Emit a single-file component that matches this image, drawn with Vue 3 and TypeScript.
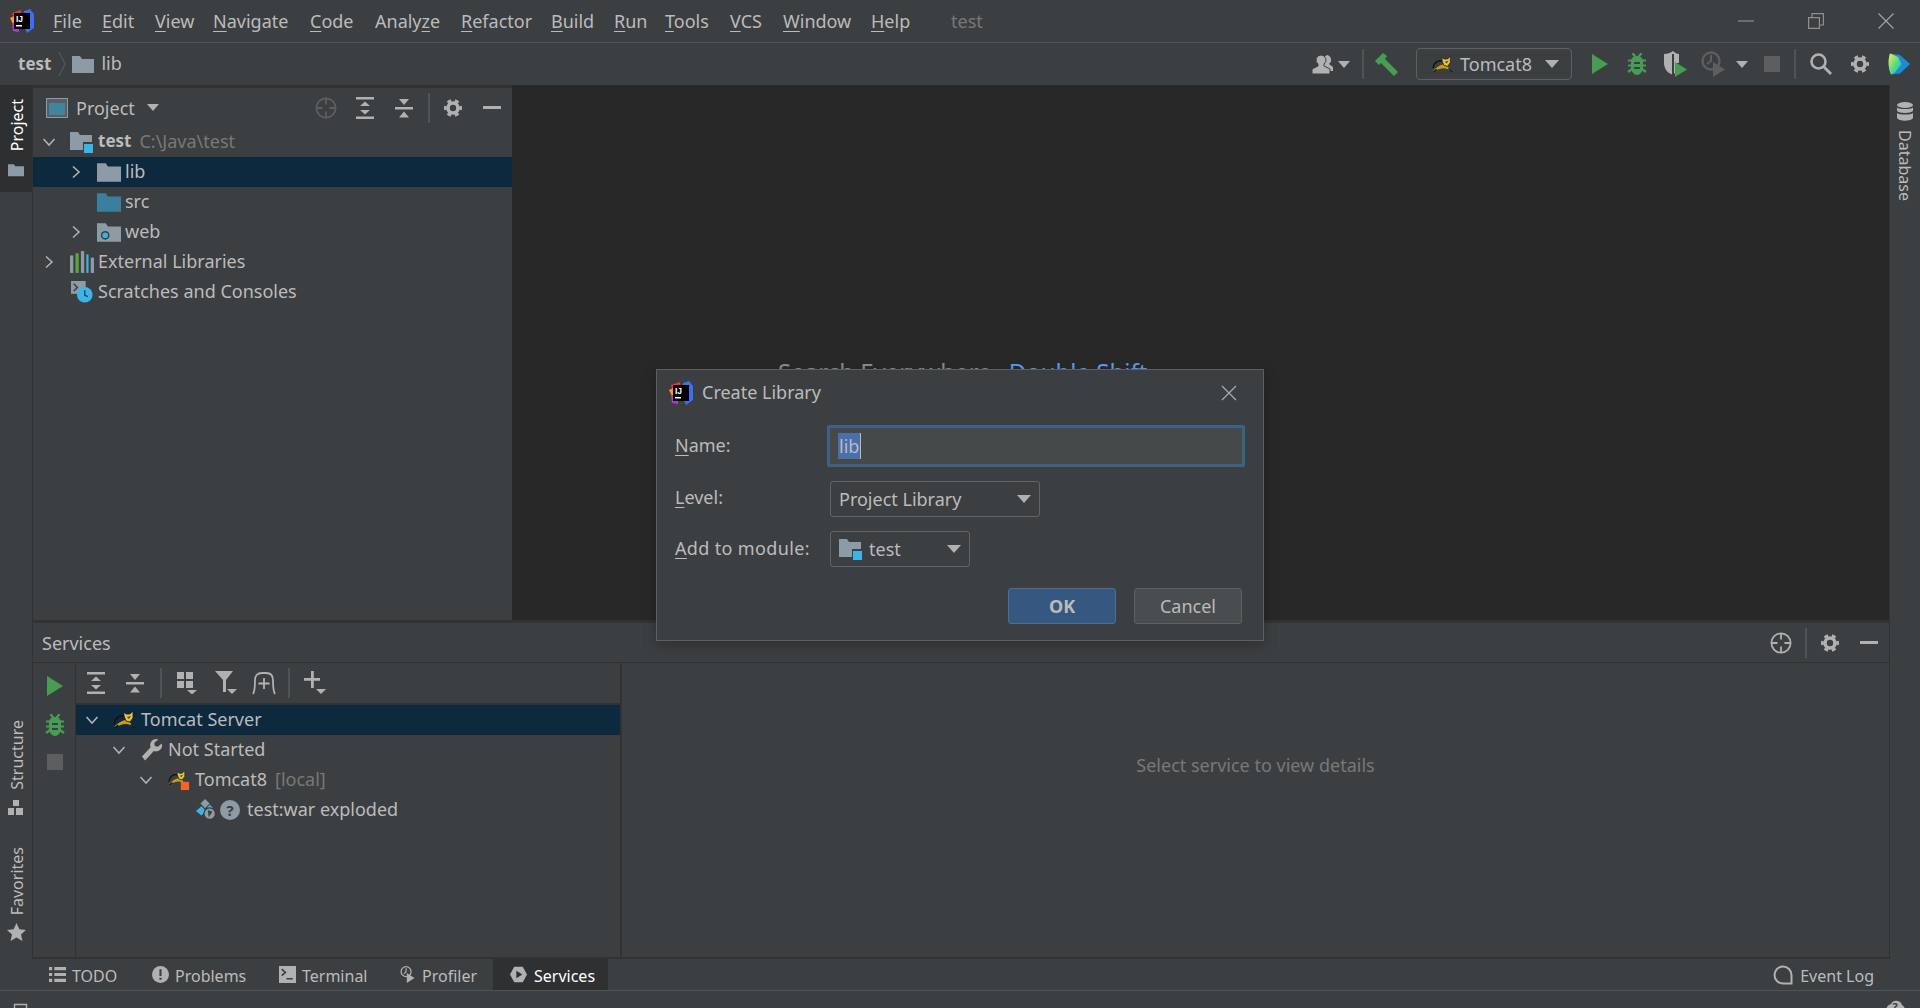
<script setup lang="ts">
interface Menu { pre: string; u: string; post: string; w: number }
interface Row { icon: string; icon2?: string; text: string; hint?: string; level: number; arrow?: 'down' | 'right'; bold?: boolean; selected?: boolean }

const menus: Menu[] = [
  { pre: '', u: 'F', post: 'ile', w: 49 },
  { pre: '', u: 'E', post: 'dit', w: 53 },
  { pre: '', u: 'V', post: 'iew', w: 58 },
  { pre: '', u: 'N', post: 'avigate', w: 97 },
  { pre: '', u: 'C', post: 'ode', w: 65 },
  { pre: 'Analy', u: 'z', post: 'e', w: 86 },
  { pre: '', u: 'R', post: 'efactor', w: 90 },
  { pre: '', u: 'B', post: 'uild', w: 63 },
  { pre: '', u: 'R', post: 'un', w: 51 },
  { pre: '', u: 'T', post: 'ools', w: 65 },
  { pre: '', u: 'V', post: 'CS', w: 53 },
  { pre: '', u: 'W', post: 'indow', w: 88 },
  { pre: '', u: 'H', post: 'elp', w: 80 },
]

const projectRows: Row[] = [
  { icon: 'i-module', text: 'test', hint: 'C:\\Java\\test', level: 0, arrow: 'down', bold: true },
  { icon: 'i-folder', text: 'lib', level: 1, arrow: 'right', selected: true },
  { icon: 'i-folder-src', text: 'src', level: 1 },
  { icon: 'i-folder-web', text: 'web', level: 1, arrow: 'right' },
  { icon: 'i-libs', text: 'External Libraries', level: 0, arrow: 'right' },
  { icon: 'i-scratch', text: 'Scratches and Consoles', level: 0 },
]

const serviceRows: Row[] = [
  { icon: 'i-tomcat', text: 'Tomcat Server', level: 0, arrow: 'down', selected: true },
  { icon: 'i-wrench', text: 'Not Started', level: 1, arrow: 'down' },
  { icon: 'i-tomcat-stop', text: 'Tomcat8', hint: '[local]', level: 2, arrow: 'down' },
  { icon: 'i-artifact', icon2: 'i-question', text: 'test:war exploded', level: 3 },
]

const bottomTabs = [
  { icon: 'i-todo', text: 'TODO', w: 103 },
  { icon: 'i-problems', text: 'Problems', w: 127 },
  { icon: 'i-terminal', text: 'Terminal', w: 120 },
  { icon: 'i-profiler', text: 'Profiler', w: 96 },
  { icon: 'i-services', text: 'Services', w: 115, active: true },
]
</script>

<template>
  <div class="ide">
    <!-- shared icons -->
    <svg class="defs" width="0" height="0">
      <defs>
        <linearGradient id="g-box" x1="0" y1="0" x2="1" y2="1">
          <stop offset="0" stop-color="#f7ea4a" />
          <stop offset=".55" stop-color="#55d98a" />
          <stop offset="1" stop-color="#12b5c9" />
        </linearGradient>
        <symbol id="i-logo" viewBox="0 0 24 24">
          <path d="M2 4 11 1 12 12 5 14Z" fill="#fe2857" />
          <path d="M14 2 20 0 24 5 24 19 17 24 12 14Z" fill="#3b6ff0" />
          <path d="M0 9 6 6 7 15 3 15Z" fill="#fd9a1e" />
          <path d="M2 14 9 14 9 23 3 22Z" fill="#b03bc8" />
          <rect x="4" y="4" width="16" height="16" fill="#000" />
          <text x="6" y="12.5" font-size="8.5" font-weight="700" font-family="Liberation Sans, sans-serif" fill="#fff">IJ</text>
          <rect x="6" y="16" width="6" height="1.5" fill="#fff" />
        </symbol>
        <symbol id="i-folder" viewBox="0 0 22 18">
          <path d="M0 1h8l2 3h12v14H0Z" fill="#8c9ba6" />
        </symbol>
        <symbol id="i-folder-src" viewBox="0 0 22 18">
          <path d="M0 1h8l2 3h12v14H0Z" fill="#3b7f9f" />
        </symbol>
        <symbol id="i-folder-web" viewBox="0 0 22 18">
          <path d="M0 1h8l2 3h12v14H0Z" fill="#8c9ba6" />
          <circle cx="7.5" cy="12" r="4" fill="#3d4042" />
          <circle cx="7.5" cy="12" r="2.6" fill="#3ab0e6" />
        </symbol>
        <symbol id="i-module" viewBox="0 0 24 22">
          <path d="M0 1h8l2 3h12v15H0Z" fill="#8c9ba6" />
          <rect x="13" y="11" width="11" height="11" fill="#3c3f41" />
          <rect x="14" y="13" width="9" height="9" fill="#3cb4e6" />
        </symbol>
        <symbol id="i-libs" viewBox="0 0 22 20">
          <rect x="0" y="4" width="3" height="16" fill="#8c9ba6" />
          <rect x="5" y="2" width="3" height="18" fill="#59a83a" />
          <rect x="10" y="0" width="3" height="20" fill="#8c9ba6" />
          <path d="M15 3h2v17h-2Z" fill="#3cb4e6" />
          <rect x="19" y="6" width="3" height="14" fill="#8c9ba6" />
        </symbol>
        <symbol id="i-scratch" viewBox="0 0 24 24">
          <rect x="0" y="0" width="16" height="14" fill="#8c9ba6" />
          <path d="M3 3l4 4-4 4" fill="none" stroke="#3c3f41" stroke-width="1.6" />
          <circle cx="15" cy="15" r="8.5" fill="#3cb4e6" />
          <path d="M15 10v5.5l3.5 1.5" fill="none" stroke="#1f4d63" stroke-width="1.6" />
        </symbol>
        <symbol id="i-gear" viewBox="0 0 20 20">
          <circle cx="10" cy="10" r="5" fill="none" stroke="currentColor" stroke-width="3.6" />
          <circle cx="10" cy="10" r="7.6" fill="none" stroke="currentColor" stroke-width="2.8" pathLength="12" stroke-dasharray="1 1" stroke-dashoffset=".5" />
        </symbol>
        <symbol id="i-target" viewBox="0 0 22 22">
          <circle cx="11" cy="11" r="9.6" fill="none" stroke="currentColor" stroke-width="1.8" />
          <path d="M11 1.5v6M11 14.5v6M1.5 11h6M14.5 11h6" stroke="currentColor" stroke-width="1.8" />
        </symbol>
        <symbol id="i-expand" viewBox="0 0 20 22">
          <path d="M1 0h18v2.4H1ZM1 19.6h18V22H1ZM10 4.500l5 4.500H5ZM10 17.500l-5-4.500h10Z" fill="currentColor" />
        </symbol>
        <symbol id="i-collapse" viewBox="0 0 20 22">
          <path d="M1 10h18v2.4H1ZM10 8 5 2h10ZM10 14.500l5 6H5Z" fill="currentColor" />
        </symbol>
        <symbol id="i-hammer" viewBox="0 0 24 24">
          <path d="M1 9 9 1l4 3-2 3 13 13-4 4L7 11l-2 2Z" fill="#499c54" />
        </symbol>
        <symbol id="i-bug" viewBox="0 0 20 22">
          <g fill="none" stroke="#499c54" stroke-width="2.2">
            <path d="M5.500 0l3 4M14.500 0l-3 4M1 7.500h5M1 12.500h4M1 19l4-3M19 7.500h-5M19 12.500h-4M19 19l-4-3" />
          </g>
          <path d="M10 3c3 0 5.500 2 6 4.500V15c0 3.500-3 7-6 7s-6-3.500-6-7V7.500C4.500 5 7 3 10 3Z" fill="#499c54" />
          <path d="M7 10h6M7 15h6" stroke="#3c3f41" stroke-width="2" />
        </symbol>
        <symbol id="i-coverage" viewBox="0 0 24 26">
          <path d="M1 3c3 0 7-1 9-3 2 2 4 3 6 3v9h-4v10l-2 2C4 22 1 17 1 12Z" fill="#afb1b3" />
          <path d="M10 3v21" stroke="#3c3f41" stroke-width="2" />
          <path d="M12 11l12 7.500-12 7.500Z" fill="#499c54" />
        </symbol>
        <symbol id="i-profile-run" viewBox="0 0 24 26">
          <circle cx="10" cy="10" r="8.500" fill="none" stroke="#5c5e60" stroke-width="2.400" />
          <path d="M10 4v6l-4 3" fill="none" stroke="#5c5e60" stroke-width="2" />
          <path d="M12 11l12 7.500-12 7.500Z" fill="#5c5e60" />
        </symbol>
        <symbol id="i-search" viewBox="0 0 22 22">
          <circle cx="8.500" cy="8.500" r="7" fill="none" stroke="currentColor" stroke-width="2.600" />
          <path d="M13.500 13.500l7.500 7.500" stroke="currentColor" stroke-width="2.800" />
        </symbol>
        <symbol id="i-toolbox" viewBox="0 0 22 22">
          <path d="M2 0.500 12 2 22 11 12 20.500 3 21.500C0 15 0 6 2 .5Z" fill="#1a8dd8" />
          <path d="M2 .5 10 4 13.500 11 7 19.500 3 21.500C0 15 0 6 2 .5Z" fill="url(#g-box)" />
        </symbol>
        <symbol id="i-user" viewBox="0 0 22 20">
          <path d="M12 5a5 5 0 0 1 3-4 5 5 0 0 1 2 9l4 3v4h-5l-4-4Z" fill="currentColor" />
          <path d="M9 1a5 5 0 0 1 3 9v2l6 3v5H0v-5l6-3v-2A5 5 0 0 1 9 1Z" fill="currentColor" stroke="#3c3f41" stroke-width="1" />
        </symbol>
        <symbol id="i-tomcat" viewBox="0 0 24 20">
          <path d="M1 17C5 13 8 11 12 10l4 2c2 1 4 3 6 5-4-2-7-3-9-3-4 0-8 2-12 3Z" fill="#c99c16" />
          <path d="M1 14C2 8 6 5 11 6" fill="none" stroke="#111" stroke-width="1.600" />
          <path d="M11 2l2 2h4l3-3v7l-3 4-4-1-2-5Z" fill="#e6c14a" stroke="#1c1c1c" stroke-width=".8" />
          <path d="M14 7l2 2 2-3Z" fill="#5c4808" />
          <path d="M5 15 2 18M18 14l4 4" stroke="#111" stroke-width="1.200" />
        </symbol>
        <symbol id="i-tomcat-stop" viewBox="0 0 24 24">
          <use href="#i-tomcat" width="22" height="20" />
          <rect x="14" y="14" width="9" height="9" fill="#f26522" />
        </symbol>
        <symbol id="i-wrench" viewBox="0 0 22 24">
          <path d="M15.500 0a6.500 6.500 0 0 0-6 9L0 19l3.500 4.500L13 13a6.500 6.500 0 0 0 9-6l-.5-2-4 3.500-3.500-1-.5-3.500L18 .5Z" fill="#afb1b3" />
        </symbol>
        <symbol id="i-artifact" viewBox="0 0 22 24">
          <path d="M6 8 0 13l6 5 5-5Z" fill="#3cb4e6" />
          <path d="M10 0 5 5l5 5 5-5Z" fill="#8c9ba6" />
          <path d="M15 6l4 4-7 0Z" fill="#3cb4e6" />
          <circle cx="15" cy="16" r="7" fill="#3c3f41" />
          <circle cx="15" cy="16" r="5.600" fill="#8c9ba6" />
          <path d="M13 12l5 2-2 3-2 3Z" fill="#3c3f41" />
        </symbol>
        <symbol id="i-question" viewBox="0 0 20 20">
          <circle cx="10" cy="10" r="10" fill="#8c9ba6" />
          <text x="10" y="15.500" text-anchor="middle" font-size="15" font-weight="700" font-family="Noto Sans, sans-serif" fill="#3c3f41">?</text>
        </symbol>
        <symbol id="i-group" viewBox="0 0 20 22">
          <path d="M0 0h7v7H0ZM9 0h7v7H9ZM0 9h7v7H0ZM9 9h7v7H9Z" fill="#afb1b3" />
          <path d="M10 18h10l-5 4.500Z" fill="#afb1b3" />
        </symbol>
        <symbol id="i-filter" viewBox="0 0 22 24">
          <path d="M0 0h18l-7 9v12H8V9Z" fill="#afb1b3" />
          <path d="M12 18h10l-5 5Z" fill="#afb1b3" />
        </symbol>
        <symbol id="i-newtab" viewBox="0 0 24 24">
          <path d="M1 23c2-3 2-6 2-14 0-4 2-7 7-7h4c5 0 7 3 7 7 0 8 0 11 2 14" fill="none" stroke="#afb1b3" stroke-width="1.800" />
          <path d="M12 7v11M6.500 12.500h11" stroke="#afb1b3" stroke-width="1.800" />
        </symbol>
        <symbol id="i-plus" viewBox="0 0 22 24">
          <path d="M7 0h2.800v7H16v2.800H9.800V17H7V9.800H0V7h7Z" fill="#afb1b3" />
          <path d="M12 18h10l-5 5Z" fill="#afb1b3" />
        </symbol>
        <symbol id="i-todo" viewBox="0 0 16 16">
          <path d="M0 1h3v3H0ZM5 1h11v3H5ZM0 6.500h3v3H0ZM5 6.500h11v3H5ZM0 12h3v3H0ZM5 12h11v3H5Z" fill="#afb1b3" />
        </symbol>
        <symbol id="i-problems" viewBox="0 0 16 16">
          <circle cx="8" cy="8" r="8" fill="#afb1b3" />
          <path d="M7 3h2v6.500H7ZM7 11h2v2H7Z" fill="#3c3f41" />
        </symbol>
        <symbol id="i-terminal" viewBox="0 0 16 16">
          <rect width="16" height="16" fill="#afb1b3" />
          <path d="M2.500 3l3.500 3-3.500 3M7 12h6" fill="none" stroke="#3c3f41" stroke-width="1.500" />
        </symbol>
        <symbol id="i-profiler" viewBox="0 0 20 24">
          <circle cx="8" cy="8" r="7" fill="none" stroke="#afb1b3" stroke-width="1.800" />
          <path d="M8 3v5l-3 3" fill="none" stroke="#afb1b3" stroke-width="1.600" />
          <path d="M9 10l11 7-11 7Z" fill="#afb1b3" />
        </symbol>
        <symbol id="i-services" viewBox="0 0 20 20">
          <path d="M5 1h10l5 9-5 9H5L0 10Z" fill="#afb1b3" />
          <path d="M7.500 5.500l7 4.500-7 4.500Z" fill="#2e3032" />
        </symbol>
      </defs>
    </svg>

    <header class="titlebar">
      <svg class="logo"><use href="#i-logo" /></svg>
      <nav class="menu">
        <span v-for="m in menus" :key="m.pre + m.u + m.post" class="menu-item" :style="{ width: m.w + 'px' }">{{ m.pre }}<u>{{ m.u }}</u>{{ m.post }}</span>
      </nav>
      <span class="win-title">test</span>
      <div class="win-buttons">
        <svg width="16" height="16" viewBox="0 0 16 16"><path d="M0 8h16" stroke="#8d8f91" stroke-width="1.200" /></svg>
        <svg width="16" height="16" viewBox="0 0 16 16"><path d="M.6 4.600h10.800v10.800H.6ZM4 4.500V.6h11.400V12H11.500" fill="none" stroke="#8d8f91" stroke-width="1.200" /></svg>
        <svg width="16" height="16" viewBox="0 0 16 16"><path d="M.5.500l15 15M15.500.500l-15 15" stroke="#a0a2a4" stroke-width="1.200" /></svg>
      </div>
    </header>

    <div class="navbar">
      <b class="crumb-root">test</b>
      <svg class="crumb-sep" width="8" height="26" viewBox="0 0 8 26"><path d="M1 1l6 12-6 12" fill="none" stroke="#5c5f61" /></svg>
      <svg class="ic-folder" width="22" height="18"><use href="#i-folder" /></svg>
      <span class="crumb-text">lib</span>
      <div class="nav-tools">
        <svg class="t-user" width="22" height="20"><use href="#i-user" /></svg>
        <i class="caret t-user-caret"></i>
        <i class="tool-sep t-sep1"></i>
        <svg class="t-hammer" width="24" height="24"><use href="#i-hammer" /></svg>
        <div class="run-combo">
          <svg width="22" height="19"><use href="#i-tomcat" /></svg>
          <span>Tomcat8</span>
          <i class="caret big"></i>
        </div>
        <svg class="t-run" width="16" height="20" viewBox="0 0 16 20"><path d="M0 0l16 10L0 20Z" fill="#499c54" /></svg>
        <svg class="t-bug" width="20" height="22"><use href="#i-bug" /></svg>
        <svg class="t-cov" width="24" height="26"><use href="#i-coverage" /></svg>
        <svg class="t-prof" width="24" height="26"><use href="#i-profile-run" /></svg>
        <i class="caret t-prof-caret"></i>
        <i class="stop t-stop"></i>
        <i class="tool-sep t-sep2"></i>
        <svg class="t-search" width="22" height="22"><use href="#i-search" /></svg>
        <svg class="t-gear" width="20" height="20"><use href="#i-gear" /></svg>
        <svg class="t-box" width="22" height="22"><use href="#i-toolbox" /></svg>
      </div>
    </div>

    <div class="main">
      <aside class="stripe left">
        <div class="tab-project">
          <span class="vlabel up">Project</span>
          <svg width="16" height="14" viewBox="0 0 22 18"><use href="#i-folder" /></svg>
        </div>
        <div class="stripe-bottom">
          <div class="tab-plain structure">
            <span class="vlabel up">Structure</span>
            <svg width="16" height="15" viewBox="0 0 16 15"><path d="M5 0h6v6H5ZM0 8h6v7H0ZM8 8h7v7H8Z" fill="#afb1b3" /></svg>
          </div>
          <div class="tab-plain">
            <span class="vlabel up">Favorites</span>
            <svg width="19" height="18" viewBox="0 0 19 18"><path d="M9.500 0l2.900 6.200 6.600.7-5 4.500 1.500 6.600-6-3.500-6 3.500 1.500-6.600-5-4.500 6.600-.7Z" fill="#afb1b3" /></svg>
          </div>
        </div>
      </aside>

      <div class="center">
        <div class="upper">
          <section class="project">
            <div class="panel-head">
              <svg class="view-ic" width="22" height="20" viewBox="0 0 22 20"><rect x=".5" y=".5" width="21" height="19" fill="#5b5e60" stroke="#8c9ba6" /><rect x="3" y="5" width="16" height="12" fill="#3e86a0" /></svg>
              <span class="panel-name">Project</span>
              <i class="caret"></i>
              <div class="head-tools">
                <svg class="dim h-target" width="22" height="22"><use href="#i-target" /></svg>
                <svg class="h-expand" width="20" height="22"><use href="#i-expand" /></svg>
                <svg class="h-collapse" width="20" height="22"><use href="#i-collapse" /></svg>
                <i class="tool-sep h-sep"></i>
                <svg class="h-gear" width="20" height="20"><use href="#i-gear" /></svg>
                <i class="hide"></i>
              </div>
            </div>
            <div v-for="r in projectRows" :key="r.text" class="row" :class="{ selected: r.selected }" :style="{ paddingLeft: 9 + r.level * 27 + 'px' }">
              <span class="arrow">
                <svg v-if="r.arrow" width="14" height="14" viewBox="0 0 14 14"><path :d="r.arrow === 'down' ? 'M1.500 4l5.500 6 5.500-6' : 'M4 1.500l6 5.500-6 5.500'" fill="none" stroke="#afb1b3" stroke-width="1.600" /></svg>
              </span>
              <svg class="row-ic" width="24" height="22"><use :href="'#' + r.icon" /></svg>
              <span class="row-text" :class="{ bold: r.bold }">{{ r.text }}</span>
              <span v-if="r.hint" class="row-hint">{{ r.hint }}</span>
            </div>
          </section>
          <section class="editor">
            <div class="empty-hint">Search Everywhere<span class="shortcut">Double Shift</span></div>
          </section>
        </div>

        <section class="services">
          <div class="panel-head services-head">
            <span class="services-name">Services</span>
            <div class="head-tools">
              <svg class="h-target" width="22" height="22"><use href="#i-target" /></svg>
              <i class="tool-sep h-sep"></i>
              <svg class="h-gear" width="20" height="20"><use href="#i-gear" /></svg>
              <i class="hide"></i>
            </div>
          </div>
          <div class="services-body">
            <div class="svc-strip">
              <svg width="16" height="20" viewBox="0 0 16 20"><path d="M0 0l16 10L0 20Z" fill="#499c54" /></svg>
              <svg width="20" height="22"><use href="#i-bug" /></svg>
              <i class="stop"></i>
            </div>
            <div class="svc-tree">
              <div class="svc-toolbar">
                <svg class="a1" width="20" height="22"><use href="#i-expand" /></svg>
                <svg class="a2" width="20" height="22"><use href="#i-collapse" /></svg>
                <i class="tool-sep a3"></i>
                <svg class="a4" width="20" height="22"><use href="#i-group" /></svg>
                <svg class="a5" width="22" height="24"><use href="#i-filter" /></svg>
                <svg class="a6" width="24" height="24"><use href="#i-newtab" /></svg>
                <i class="tool-sep a7"></i>
                <svg class="a8" width="22" height="24"><use href="#i-plus" /></svg>
              </div>
              <div v-for="r in serviceRows" :key="r.text" class="row" :class="{ selected: r.selected }" :style="{ paddingLeft: 9 + r.level * 27 + 'px' }">
                <span class="arrow">
                  <svg v-if="r.arrow" width="14" height="14" viewBox="0 0 14 14"><path d="M1.500 4l5.500 6 5.500-6" fill="none" stroke="#afb1b3" stroke-width="1.600" /></svg>
                </span>
                <svg class="row-ic" width="24" height="22"><use :href="'#' + r.icon" /></svg>
                <svg v-if="r.icon2" class="row-ic2" width="20" height="20"><use :href="'#' + r.icon2" /></svg>
                <span class="row-text">{{ r.text }}</span>
                <span v-if="r.hint" class="row-hint">{{ r.hint }}</span>
              </div>
            </div>
            <div class="svc-detail">Select service to view details</div>
          </div>
        </section>
      </div>

      <aside class="stripe right">
        <svg width="18" height="19" viewBox="0 0 18 19">
          <g fill="#afb1b3"><ellipse cx="9" cy="3" rx="8" ry="3" /><path d="M1 5.500c2 2 14 2 16 0V9c-2 2.500-14 2.500-16 0ZM1 11c2 2 14 2 16 0v5c-2 3.500-14 3.500-16 0Z" /></g>
        </svg>
        <span class="vlabel down">Database</span>
      </aside>
    </div>

    <div class="toolbar-bottom">
      <div v-for="t in bottomTabs" :key="t.text" class="bottom-tab" :class="{ active: t.active }" :style="{ width: t.w + 'px' }">
        <svg width="17" height="17"><use :href="'#' + t.icon" /></svg>
        <span>{{ t.text }}</span>
      </div>
      <div class="event-log">
        <svg width="20" height="20" viewBox="0 0 20 20"><path d="M18.500 18.500H10a8.500 8.500 0 1 1 8.500-8.500Z" fill="none" stroke="#afb1b3" stroke-width="2" /></svg>
        <span>Event Log</span>
      </div>
    </div>

    <footer class="status">
      <svg width="20" height="17" viewBox="0 0 20 17"><path d="M6.500 7.500h12v12h-12ZM6.500 12H1v7" fill="none" stroke="#afb1b3" stroke-width="1.400" /></svg>
      <svg class="status-help" width="22" height="14" viewBox="0 0 22 14"><path d="M3 14a7 7 0 0 1 5-7 6 6 0 0 1 11 1c2 1 3 3 3 6Z" fill="#afb1b3" /><text x="12" y="14" text-anchor="middle" font-size="11" font-weight="700" font-family="Noto Sans, sans-serif" fill="#3c3f41">?</text></svg>
    </footer>

    <!-- modal dialog over the IDE -->
    <div class="dialog">
      <div class="dlg-title">
        <svg width="24" height="24"><use href="#i-logo" /></svg>
        <span>Create Library</span>
        <svg class="dlg-close" width="16" height="16" viewBox="0 0 16 16"><path d="M1 1l14 14M15 1 1 15" stroke="#a9abad" stroke-width="1.300" /></svg>
      </div>
      <div class="dlg-form">
        <label class="dlg-label"><u>N</u>ame:</label>
        <div class="name-field"><span class="sel">lib</span><i class="cursor"></i></div>
        <label class="dlg-label level"><u>L</u>evel:</label>
        <div class="combo combo-level"><span>Project Library</span><i class="caret big"></i></div>
        <label class="dlg-label module"><u>A</u>dd to module:</label>
        <div class="combo combo-module">
          <svg width="24" height="22"><use href="#i-module" /></svg>
          <span>test</span>
          <i class="caret big"></i>
        </div>
      </div>
      <div class="dlg-buttons">
        <button class="btn primary">OK</button>
        <button class="btn">Cancel</button>
      </div>
    </div>
  </div>
</template>

<style>
html, body {
  margin: 0;
  background: #3c3f41;
}
</style>

<style scoped>
.ide {
  position: relative;
  width: 1920px;
  height: 1008px;
  overflow: hidden;
  display: flex;
  flex-direction: column;
  background: #3c3f41;
  color: #bbbbbb;
  font-family: "Noto Sans", "Open Sans", sans-serif;
  font-size: 18px;
  line-height: 24px;
}
.defs { position: absolute; }
svg { flex: none; display: block; color: #afb1b3; }
i { display: block; flex: none; }
u { text-underline-offset: 3px; text-decoration-thickness: 1px; }

/* title bar */
.titlebar {
  height: 42px;
  flex: none;
  display: flex;
  align-items: center;
  border-bottom: 1px solid #515455;
  box-sizing: content-box;
}
.logo { width: 24px; height: 24px; margin-left: 10px; }
.menu { display: flex; margin-left: 19px; }
.menu-item { white-space: nowrap; }
.win-title { color: #787878; }
.win-buttons { margin-left: auto; display: flex; gap: 54px; padding-right: 26px; }

/* navigation bar */
.navbar {
  height: 42px;
  flex: none;
  display: flex;
  align-items: center;
  padding-left: 18px;
}
.crumb-root { font-weight: 700; font-size: 17px; }
.crumb-sep { margin: 0 6px 0 7px; }
.crumb-text { margin-left: 7px; margin-bottom: 2px; }
.nav-tools { margin-left: auto; display: flex; align-items: center; }
.t-user { margin-right: 4px; }
.t-user-caret { margin-right: 12px; }
.t-sep1 { margin-right: 10px; }
.t-hammer { margin-right: 18px; }
.run-combo {
  width: 156px;
  height: 32px;
  box-sizing: border-box;
  border: 1px solid #5e6060;
  border-radius: 4px;
  display: flex;
  align-items: center;
  padding: 0 12px 0 15px;
  gap: 6px;
  margin-right: 20px;
}
.run-combo .caret { margin-left: auto; }
.t-run { margin-right: 19px; }
.t-bug { margin-right: 16px; }
.t-cov { margin-right: 14px; }
.t-prof { margin-right: 11px; }
.t-prof-caret { margin-right: 16px; }
.t-stop { margin-right: 14px; }
.t-sep2 { margin-right: 14px; }
.t-search { margin-right: 18px; }
.t-gear { margin-right: 18px; }
.t-box { margin-right: 10px; }

.caret {
  width: 0;
  height: 0;
  border-left: 6px solid transparent;
  border-right: 6px solid transparent;
  border-top: 7px solid #afb1b3;
}
.caret.big { border-left-width: 7px; border-right-width: 7px; border-top-width: 8px; }
.tool-sep { width: 2px; height: 30px; background: #515455; }
.stop { width: 16px; height: 16px; background: #5c5e60; }
.hide { width: 18px; height: 3px; background: #afb1b3; }

/* main area */
.main { flex: 1; min-height: 0; display: flex; }
.stripe { flex: none; display: flex; flex-direction: column; }
.stripe.left { width: 33px; border-right: 1px solid #323232; box-sizing: border-box; }
.stripe.right {
  width: 31px;
  border-left: 1px solid #323232;
  box-sizing: border-box;
  align-items: center;
  padding-top: 17px;
  gap: 9px;
}
.vlabel { writing-mode: vertical-rl; font-size: 16px; white-space: nowrap; line-height: 20px; }
.vlabel.up { transform: rotate(180deg); margin-left: 2px; }
.tab-project {
  height: 107px;
  width: 32px;
  background: #2d2f30;
  color: #ffffff;
  display: flex;
  flex-direction: column;
  align-items: center;
  padding-top: 14px;
  box-sizing: border-box;
  gap: 12px;
}
.stripe-bottom { margin-top: auto; padding-bottom: 18px; display: flex; flex-direction: column; gap: 32px; }
.tab-plain { display: flex; flex-direction: column; align-items: center; gap: 8px; }
.tab-plain.structure { gap: 10px; }

.center { flex: 1; min-width: 0; display: flex; flex-direction: column; }
.upper { height: 535px; flex: none; display: flex; }
.project { width: 479px; flex: none; border-top: 3px solid #323232; box-sizing: border-box; }
.editor { flex: 1; background: #282828; padding-top: 271px; box-sizing: border-box; overflow: hidden; }
.empty-hint { margin-left: 266px; color: #8c8c8c; font-size: 24px; line-height: 32px; white-space: nowrap; }
.shortcut { color: #589df6; margin-left: 17px; }

.panel-head { height: 39px; display: flex; align-items: center; box-sizing: border-box; }
.view-ic { margin-left: 13px; }
.panel-name { margin-left: 8px; }
.panel-head .caret { margin-left: 12px; }
.head-tools { margin-left: auto; display: flex; align-items: center; padding-right: 11px; }
.head-tools .dim { color: #5c5e60; }
.h-target { margin-right: 18px; }
.services .h-target { margin-right: 13px; }
.h-expand { margin-right: 19px; }
.h-collapse { margin-right: 14px; }
.h-sep { margin-right: 13px; }
.h-gear { margin-right: 20px; }

.row { height: 30px; display: flex; align-items: center; box-sizing: border-box; white-space: nowrap; }
.row.selected { background: #0d293e; }
.arrow { width: 28px; flex: none; }
.row-ic { margin-right: 4px; }
.row-ic2 { margin: 0 7px 0 -2px; }
.row-text, .row-hint { margin-bottom: 2px; }
.row-text.bold { font-weight: 700; font-size: 17px; }
.row-hint { color: #787878; margin-left: 8px; }

/* services */
.services { flex: 1; min-height: 0; display: flex; flex-direction: column; border-top: 3px solid #323232; border-bottom: 2px solid #323232; }
.services-head { height: 40px; flex: none; border-bottom: 1px solid #323232; }
.services-name { margin-left: 9px; }
.services-body { flex: 1; min-height: 0; display: flex; }
.svc-strip {
  width: 43px;
  flex: none;
  display: flex;
  flex-direction: column;
  align-items: center;
  padding: 13px 0 0 2px;
  gap: 18px;
  box-sizing: border-box;
  border-right: 1px solid #323232;
}
.svc-tree { width: 544px; flex: none; border-right: 2px solid #323232; }
.svc-toolbar { height: 42px; box-sizing: border-box; display: flex; align-items: center; padding-left: 10px; border-bottom: 2px solid #323232; }
.svc-toolbar .a2 { margin-left: 19px; }
.svc-toolbar .a3 { margin-left: 15px; }
.svc-toolbar .a4 { margin-left: 15px; }
.svc-toolbar .a5 { margin-left: 18px; }
.svc-toolbar .a6 { margin-left: 15px; }
.svc-toolbar .a7 { margin-left: 12px; }
.svc-toolbar .a8 { margin-left: 14px; }
.svc-detail { flex: 1; text-align: center; padding-top: 90px; color: #787878; }

/* bottom tool window bar */
.toolbar-bottom {
  height: 31px;
  flex: none;
  display: flex;
  align-items: stretch;
  padding-left: 47px;
  font-size: 16px;
  border-bottom: 1px solid #515455;
}
.bottom-tab { display: flex; align-items: center; gap: 6px; box-sizing: border-box; white-space: nowrap; padding-left: 2px; }
.bottom-tab span, .event-log span { margin-top: 2px; }
.bottom-tab.active { background: #2e3032; color: #ffffff; padding-left: 17px; gap: 7px; }
.event-log { margin-left: auto; display: flex; align-items: center; gap: 7px; padding-right: 46px; }

.status { height: 17px; flex: none; overflow: hidden; display: flex; padding: 6px 0 0 8px; box-sizing: border-box; justify-content: space-between; }
.status-help { margin-right: 15px; }

/* dialog */
.dialog {
  position: absolute;
  left: 656px;
  top: 369px;
  width: 608px;
  height: 272px;
  box-sizing: border-box;
  background: #3c3f41;
  border: 1px solid #5e6060;
  padding: 0 18px;
  display: flex;
  flex-direction: column;
  box-shadow: 0 4px 12px rgba(0, 0, 0, 0.25);
}
.dlg-title { height: 45px; display: flex; align-items: center; margin-left: -6px; }
.dlg-title span { margin-left: 9px; margin-bottom: 2px; }
.dlg-close { margin-left: auto; margin-right: 8px; }
.dlg-form {
  display: grid;
  grid-template-columns: 152px 1fr;
  grid-template-rows: 42px 36px 36px;
  row-gap: 14px;
  align-items: center;
  margin-top: 10px;
}
.dlg-label { white-space: nowrap; padding-bottom: 3px; }
.dlg-label.level { padding-bottom: 5px; }
.dlg-label.module { letter-spacing: .35px; }
.name-field {
  height: 42px;
  box-sizing: border-box;
  border: 3px solid #3d6185;
  border-radius: 2px;
  background: #45494a;
  display: flex;
  align-items: center;
  padding-left: 8px;
}
.sel { background: #4b6eaf; line-height: 26px; padding: 0 0 0 1px; width: 22px; box-sizing: border-box; }
.cursor { width: 1px; height: 26px; background: #bbbbbb; }
.combo {
  height: 36px;
  box-sizing: border-box;
  margin-left: 3px;
  border: 1px solid #646464;
  border-radius: 3px;
  display: flex;
  align-items: center;
  padding: 0 8px;
}
.combo .caret { margin-left: auto; }
.combo-level { width: 210px; }
.combo-module { width: 140px; }
.combo-module span { margin-left: 6px; }
.dlg-buttons { display: flex; justify-content: flex-end; gap: 18px; margin-top: 21px; padding-right: 3px; }
.btn {
  width: 108px;
  height: 36px;
  box-sizing: border-box;
  border: 1px solid #5e6060;
  border-radius: 3px;
  background: #4a4d4f;
  color: #bbbbbb;
  font: inherit;
}
.btn.primary { background: #365880; border-color: #4c708c; font-weight: 700; }
</style>
